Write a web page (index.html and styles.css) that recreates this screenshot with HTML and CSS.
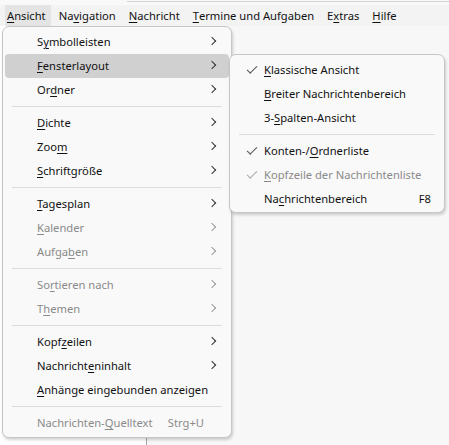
FILE: index.html
```html
<!DOCTYPE html>
<html lang="de">
<head>
    <meta charset="UTF-8">
    <title>Ansicht</title>
    <link rel="stylesheet" href="styles.css">
</head>
<body>

    <div class="topline"></div>

    <div class="menubar">
        <span class="menubar-item open"><u>A</u>nsicht</span>
        <span class="menubar-item">Na<u>v</u>igation</span>
        <span class="menubar-item"><u>N</u>achricht</span>
        <span class="menubar-item"><u>T</u>ermine und Aufgaben</span>
        <span class="menubar-item">E<u>x</u>tras</span>
        <span class="menubar-item"><u>H</u>ilfe</span>
    </div>

    <div class="workspace">
        <div class="folder-strip"></div>
        <div class="pane"></div>
    </div>

    <!-- Ansicht menu -->
    <div class="menu main-menu">
        <div class="item">S<u>y</u>mbolleisten<span class="chev"></span></div>
        <div class="item active"><u>F</u>ensterlayout<span class="chev"></span></div>
        <div class="item">Or<u>d</u>ner<span class="chev"></span></div>
        <div class="sep"></div>
        <div class="item"><u>D</u>ichte<span class="chev"></span></div>
        <div class="item">Zoo<u>m</u><span class="chev"></span></div>
        <div class="item"><u>S</u>chriftgröße<span class="chev"></span></div>
        <div class="sep"></div>
        <div class="item"><u>T</u>agesplan<span class="chev"></span></div>
        <div class="item disabled"><u>K</u>alender<span class="chev"></span></div>
        <div class="item disabled">Aufga<u>b</u>en<span class="chev"></span></div>
        <div class="sep"></div>
        <div class="item disabled">So<u>r</u>tieren nach<span class="chev"></span></div>
        <div class="item disabled">T<u>h</u>emen<span class="chev"></span></div>
        <div class="sep"></div>
        <div class="item">Kopf<u>z</u>eilen<span class="chev"></span></div>
        <div class="item">Nachricht<u>e</u>ninhalt<span class="chev"></span></div>
        <div class="item"><u>A</u>nhänge eingebunden anzeigen</div>
        <div class="sep"></div>
        <div class="item disabled">Nachrichten-<u>Q</u>uelltext<span class="key">Strg+U</span></div>
    </div>

    <!-- Fensterlayout submenu -->
    <div class="menu sub-menu">
        <div class="item checked"><u>K</u>lassische Ansicht</div>
        <div class="item"><u>B</u>reiter Nachrichtenbereich</div>
        <div class="item">3-<u>S</u>palten-Ansicht</div>
        <div class="sep"></div>
        <div class="item checked">Konten-/<u>O</u>rdnerliste</div>
        <div class="item checked disabled"><u>K</u>opfzeile der Nachrichtenliste</div>
        <div class="item">Na<u>c</u>hrichtenbereich<span class="key">F8</span></div>
    </div>

</body>
</html>
```

FILE: styles.css
```css
body {
    margin: 0;
    width: 449px;
    height: 445px;
    overflow: hidden;
    position: relative;
    background-color: #f7f7f7;
    font-family: 'Noto Sans', sans-serif;
    font-size: 11.2px;
    color: #111;
}

u {
    text-decoration-thickness: 1px;
    text-underline-offset: 2px;
}

.topline {
    height: 5px;
    background-color: #f9f9f9;
    background-image: linear-gradient(#f9f9f9 1px, #d2d2d2 1px, #d2d2d2 2px, transparent 2px);
    background-position: 127px 0;
    background-repeat: no-repeat;
}

.menubar {
    display: flex;
    height: 21px;
    align-items: stretch;
    padding-left: 5px;
    background-color: #f3f3f3;
}

.menubar-item {
    display: flex;
    align-items: center;
    padding: 0 5px 0 2px;
    margin-right: 6px;
}

.menubar-item.open {
    background-color: #e4e4e4;
}

.workspace {
    display: flex;
    height: 419px;
}

.folder-strip {
    width: 146px;
    background-color: #ffffff;
    border-right: 1px solid #a8a8a8;
}

.pane {
    flex: 1;
    background-color: #f7f7f7;
}

/* popup menus */
.menu {
    position: absolute;
    box-sizing: border-box;
    background-color: #f9f9f9;
    border: 1px solid #c6c6c6;
    border-radius: 7px;
    box-shadow: 1px 2px 3px rgba(0, 0, 0, 0.18);
    padding: 3px 2px;
}

.main-menu {
    left: 2px;
    top: 26px;
    width: 230px;
    height: 412px;
}

.sub-menu {
    left: 229px;
    top: 54px;
    width: 216px;
    height: 159px;
}

.item {
    position: relative;
    height: 24px;
    line-height: 24px;
    padding-left: 32px;
    border-radius: 4px;
    white-space: nowrap;
}

.item.active {
    background-color: #d0d0d0;
}

.item.disabled {
    color: #8a8a8a;
}

.sep {
    height: 1px;
    margin: 4px 7px 4px 7px;
    background-color: #dcdcdc;
}

.chev {
    position: absolute;
    right: 13px;
    top: 8px;
    width: 5px;
    height: 5px;
    border-top: 1px solid #333;
    border-right: 1px solid #333;
    transform: translateX(-1px) rotate(45deg);
}

.disabled .chev {
    border-color: #9a9a9a;
}

.key {
    position: absolute;
    right: 11px;
    top: 0;
}

.main-menu .key {
    right: 25px;
}

.checked::before {
    content: "";
    position: absolute;
    left: 15px;
    top: 8px;
    width: 9px;
    height: 4px;
    border-left: 1.5px solid #555;
    border-bottom: 1.5px solid #555;
    transform: rotate(-45deg);
}

.checked.disabled::before {
    border-color: #aaa;
}
```
